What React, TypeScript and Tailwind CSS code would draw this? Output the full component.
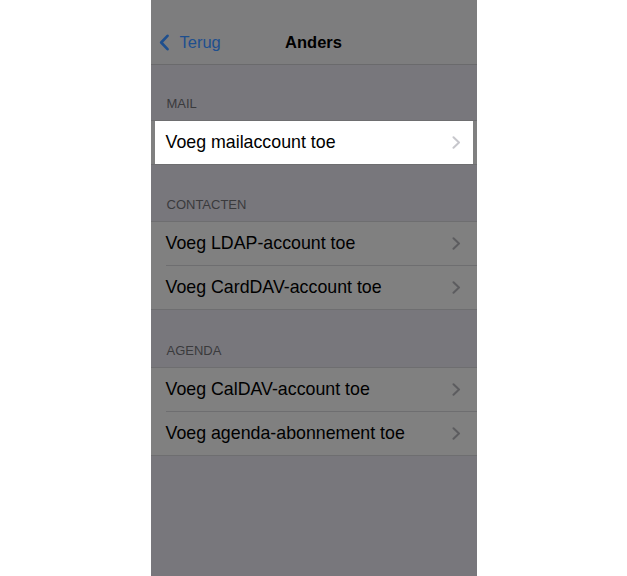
import React from "react";

const sections = [
  { title: "MAIL", rows: ["Voeg mailaccount toe"] },
  { title: "CONTACTEN", rows: ["Voeg LDAP-account toe", "Voeg CardDAV-account toe"] },
  { title: "AGENDA", rows: ["Voeg CalDAV-account toe", "Voeg agenda-abonnement toe"] },
];

// header heights so rows land where the screenshot has them
const headerH = ["h-[55px]", "h-[56px]", "h-[57px]"];

function Chevron({ light }: { light?: boolean }) {
  return (
    <svg width="9" height="13" viewBox="0 0 9 13" fill="none">
      <path
        d="M1.5 1.2 L7 6.5 L1.5 11.8"
        stroke={light ? "#c7c7cc" : "#5c5c5f"}
        strokeWidth="2"
        strokeLinecap="round"
        strokeLinejoin="round"
      />
    </svg>
  );
}

export default function App() {
  return (
    <div className="flex h-[576px] w-full justify-center bg-white font-['Liberation_Sans',Arial,sans-serif]">
      <div className="flex w-[326px] flex-col bg-[#78777c]">
        {/* nav bar */}
        <div className="flex h-[65px] flex-col border-b border-[#6a6a6c] bg-[#7d7d7e] pt-[20px]">
          <div className="relative flex h-[44px] items-center justify-center">
            <div className="absolute left-[8px] top-0 flex h-full items-center gap-[10px] text-[16px] text-[#1e4f8e]">
              <svg width="11" height="17" viewBox="0 0 11 17" fill="none">
                <path d="M8.5 1.8 L2.2 8.5 L8.5 15.2" stroke="#1e4f8e" strokeWidth="2.6" strokeLinecap="round" strokeLinejoin="round" />
              </svg>
              <span className="text-[16.5px]">Terug</span>
            </div>
            <span className="text-[16.5px] font-bold text-black">Anders</span>
          </div>
        </div>

        {sections.map((s, si) => (
          <div key={s.title} className="flex flex-col">
            <div className={`flex items-end px-[16px] pb-[7px] text-[13px] text-[#3a3a3c] ${headerH[si]}`}>
              {s.title}
            </div>
            <div className="flex flex-col border-b border-[#6e6e70] bg-[#808080]">
              {s.rows.map((r, ri) => {
                const active = si === 0;
                return (
                  <div
                    key={r}
                    className={`relative h-[44px] border-t ${ri === 0 ? "border-[#6e6e70]" : "border-transparent"}`}
                  >
                    {active && <div className="absolute inset-y-0 left-[4px] right-[4px] bg-white" />}
                    <div className="relative ml-[15px] flex h-full items-center pr-[16px]">
                      {ri > 0 && <div className="absolute left-0 right-0 top-[-1px] h-px bg-[#6e6e70]" />}
                      <span className="flex-1 text-[17.8px] text-black">{r}</span>
                      <Chevron light={active} />
                    </div>
                  </div>
                );
              })}
            </div>
          </div>
        ))}
      </div>
    </div>
  );
}
